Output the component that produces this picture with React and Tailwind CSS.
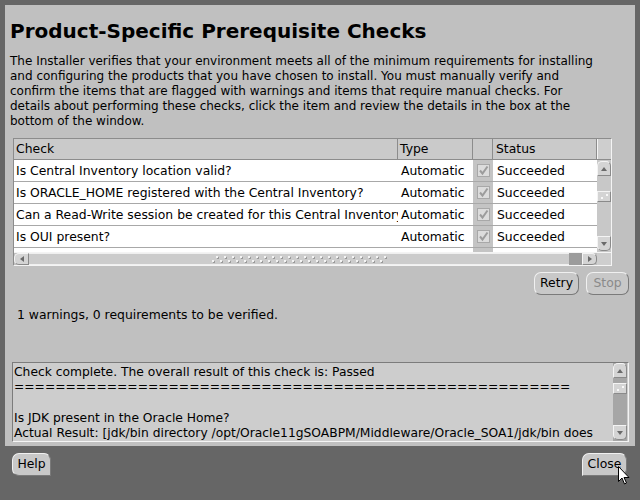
import React from 'react';

const font = "font-['DejaVu_Sans','Liberation_Sans',sans-serif]";

const rows = [
  'Is Central Inventory location valid?',
  'Is ORACLE_HOME registered with the Central Inventory?',
  'Can a Read-Write session be created for this Central Inventory?',
  'Is OUI present?',
];

const Arrow = ({ dir, color = '#555' }) => {
  const pts = {
    up: '1,6 4,2 7,6',
    down: '1,2 4,6 7,2',
    left: '6,1 2,4 6,7',
    right: '2,1 6,4 2,7',
  }[dir];
  return (
    <svg width="8" height="8" viewBox="0 0 8 8">
      <polygon points={pts} fill={color} />
    </svg>
  );
};

const ScrollBtn = ({ dir, className = '' }) => (
  <div
    className={`flex items-center justify-center bg-[#d4d4d4] border border-[#f4f4f4] border-r-[#8a8a8a] border-b-[#8a8a8a] ${className}`}
  >
    <Arrow dir={dir} color="#6a6a6a" />
  </div>
);

const Thumb = ({ className = '' }) => (
  <div className={`relative bg-[#d4d4d4] border border-[#f4f4f4] border-r-[#8a8a8a] border-b-[#8a8a8a] ${className}`}>
    <span className="absolute right-[2px] top-[2px] w-[2px] h-[2px] bg-[#f8f8f8]" />
    <span className="absolute left-[3px] bottom-[2px] w-[2px] h-[2px] bg-[#f8f8f8]" />
  </div>
);

const Grip = () => (
  <div className="flex flex-col gap-[2px]">
    <div className="flex gap-[6px] pl-[4px]">
      {Array.from({ length: 22 }).map((_, i) => (
        <span key={i} className="w-[2px] h-[2px] bg-[#f4f4f4] shadow-[1px_1px_0_#9a9a9a]" />
      ))}
    </div>
    <div className="flex gap-[6px]">
      {Array.from({ length: 22 }).map((_, i) => (
        <span key={i} className="w-[2px] h-[2px] bg-[#f4f4f4] shadow-[1px_1px_0_#9a9a9a]" />
      ))}
    </div>
  </div>
);

const CheckBox = () => (
  <div className="w-[13px] h-[13px] bg-[#dcdcdc] border border-[#a8a8a8] flex items-center justify-center">
    <svg width="11" height="11" viewBox="0 0 11 11">
      <path d="M2 5.5 L4.5 8.5 L9.5 1.5" stroke="#9c9c9c" strokeWidth="2" fill="none" />
    </svg>
  </div>
);

const Button = ({ children, disabled, className = '' }) => (
  <button
    className={`h-[23px] rounded-[7px] bg-[#c8c8c8] border border-[#f0f0f0] border-r-[#7a7a7a] border-b-[#7a7a7a] text-[12.4px] leading-none ${
      disabled ? 'text-[#8a8a8a]' : 'text-black'
    } ${className}`}
  >
    {children}
  </button>
);

export default function App() {
  return (
    <div className={`w-[640px] h-[500px] bg-[#666666] pt-[5px] overflow-hidden ${font} relative`}>
      <div className="mx-[5px] h-[441px] bg-[#c0c0c0] flex flex-col">
        <h1 className="mt-[14px] ml-[5px] h-[24px] text-[20px] leading-[24px] font-bold text-black whitespace-nowrap">
          Product-Specific Prerequisite Checks
        </h1>
        <p className="mt-[11px] ml-[5px] text-[12px] leading-[15px] text-black whitespace-nowrap">
          The Installer verifies that your environment meets all of the minimum requirements for installing
          <br />
          and configuring the products that you have chosen to install. You must manually verify and
          <br />
          confirm the items that are flagged with warnings and items that require manual checks. For
          <br />
          details about performing these checks, click the item and review the details in the box at the
          <br />
          bottom of the window.
        </p>

        {/* Checks table */}
        <div className="mt-[9px] ml-[8px] w-[599px] h-[128px] border border-[#8c8c8c] border-r-[#f4f4f4] border-b-[#f4f4f4] flex flex-col text-[12.4px] text-black">
          <div className="flex h-[21px] bg-[#cacaca] border-b border-[#8c8c8c]">
            <div className="w-[384px] pl-[2px] leading-[20px] border-r border-[#8c8c8c]">Check</div>
            <div className="w-[75px] pl-[2px] leading-[20px] border-r border-[#8c8c8c]">Type</div>
            <div className="w-[20px] border-r border-[#8c8c8c]" />
            <div className="w-[104px] pl-[3px] leading-[20px] border-r border-[#8c8c8c]">Status</div>
            <div className="w-[14px] bg-[#cecece] border-l border-[#f4f4f4]" />
          </div>
          <div className="flex h-[92px]">
            <div className="w-[583px] bg-white flex flex-col overflow-hidden">
              {rows.map((r) => (
                <div key={r} className="flex h-[22px] shrink-0 border-b border-[#a8a8a8]">
                  <div className="w-[384px] pl-[2px] leading-[21px] whitespace-nowrap overflow-hidden">{r}</div>
                  <div className="w-[75px] pl-[3px] leading-[21px]">Automatic</div>
                  <div className="w-[20px] bg-[#c4c4c4] flex items-center justify-center">
                    <CheckBox />
                  </div>
                  <div className="w-[104px] pl-[4px] leading-[21px]">Succeeded</div>
                </div>
              ))}
              <div className="flex h-[4px] shrink-0">
                <div className="w-[459px]" />
                <div className="w-[20px] bg-[#c4c4c4]" />
              </div>
            </div>
            <div className="w-[14px] bg-[#c8c8c8] flex flex-col">
              <ScrollBtn dir="up" className="h-[15px] mt-[1px] rounded-t-[5px]" />
              <Thumb className="h-[11px] mt-[15px]" />
              <div className="flex-1" />
              <ScrollBtn dir="down" className="h-[15px] mb-[1px] rounded-b-[5px]" />
            </div>
          </div>
          <div className="flex h-[14px] border-t border-[#f4f4f4]">
            <ScrollBtn dir="left" className="w-[15px] rounded-l-[5px]" />
            <div className="w-[540px] bg-[#cccccc] border-y border-[#f0f0f0] flex items-center justify-center">
              <Grip />
            </div>
            <div className="w-[13px] bg-[#9c9c9c]" />
            <ScrollBtn dir="right" className="w-[15px] rounded-r-[5px]" />
            <div className="w-[14px] bg-[#cecece]" />
          </div>
        </div>

        <div className="mt-[6px] flex justify-end gap-[7px] mr-[6px]">
          <Button className="w-[45px]">Retry</Button>
          <Button className="w-[43px]" disabled>
            Stop
          </Button>
        </div>

        <div className="mt-[12px] ml-[12px] text-[12.4px] leading-[15px] text-black">
          1 warnings, 0 requirements to be verified.
        </div>

        {/* Details box */}
        <div className="mt-[40px] ml-[7px] w-[617px] h-[80px] bg-[#cdcdcd] border border-[#7c7c7c] border-r-[#f4f4f4] border-b-[#f4f4f4] flex">
          <div className="flex-1 pl-[1px] pt-[2px] text-[12.3px] leading-[15.3px] text-black whitespace-nowrap overflow-hidden">
            Check complete. The overall result of this check is: Passed
            <br />
            ======================================================
            <br />
            <br />
            Is JDK present in the Oracle Home?
            <br />
            Actual Result: [jdk/bin directory /opt/Oracle11gSOABPM/Middleware/Oracle_SOA1/jdk/bin does
          </div>
          <div className="w-[14px] mr-[1px] bg-[#a6a6a6] flex flex-col">
            <ScrollBtn dir="up" className="h-[15px] rounded-t-[5px]" />
            <Thumb className="h-[11px] mt-[5px]" />
            <div className="flex-1" />
            <ScrollBtn dir="down" className="h-[15px] mb-[1px] rounded-b-[5px]" />
          </div>
        </div>
      </div>

      <div className="mt-[7px] mx-[12px] flex justify-between">
        <Button className="w-[39px] rounded-br-none">Help</Button>
        <Button className="w-[45px] mr-[1px] rounded-bl-none">Close</Button>
      </div>

      {/* mouse pointer */}
      <svg className="absolute left-[618px] top-[466px]" width="12" height="19" viewBox="0 0 12 19">
        <path
          d="M0.5 0.5 L0.5 15.5 L4 12 L6.5 18 L8.5 17 L6 11.5 L11 11.5 Z"
          fill="white"
          stroke="black"
          strokeWidth="1"
        />
      </svg>
    </div>
  );
}
